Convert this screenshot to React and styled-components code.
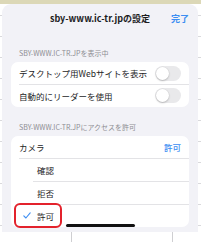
import React from 'react'
import styled, { createGlobalStyle } from 'styled-components'

const Global = createGlobalStyle`
  html, body { margin: 0; padding: 0; background: #fff; }
  * { box-sizing: border-box; }
`;

const Page = styled.div`
  position: relative;
  width: 201px;
  height: 242px;
  overflow: hidden;
  background: #fff;
  font-family: "Noto Sans CJK JP", "Noto Sans", sans-serif;
  display: flex;
  flex-direction: column;
`;

const TopStrip = styled.div`
  height: 4px;
  background: #dcd8b7;
`;

const BackList = styled.div`
  flex: 1;
`;

const BackRow = styled.div`
  height: ${p => p.h}px;
  border-bottom: 1px solid #d9d9dc;
`;

const TabBar = styled.div`
  height: 10px;
  display: grid;
  grid-template-columns: 71px 101px 1fr;
`;

const TabCell = styled.div`
  border-left: ${p => (p.first ? 'none' : '1px solid #cfcfd2')};
`;

const Sheet = styled.div`
  position: absolute;
  top: 4px;
  left: 2px;
  width: 196px;
  height: 228px;
  background: #f2f2f7;
  border-radius: 9px 9px 0 0;
  overflow: hidden;
  padding: 0 9px;
`;

const Header = styled.div`
  height: 28px;
  display: flex;
  align-items: center;
  justify-content: center;
  position: relative;
  margin: 0 -9px;
`;

const Title = styled.div`
  font-size: 9px;
  font-weight: 700;
  color: #1c1c1e;
`;

const Done = styled.div`
  position: absolute;
  right: 9px;
  top: 0;
  height: 28px;
  display: flex;
  align-items: center;
  font-size: 9px;
  font-weight: 700;
  color: #3d8ef2;
`;

const SectionHead = styled.div`
  padding: ${p => p.top}px 8px 4px;
  font-size: 7px;
  line-height: 9px;
  color: #8e8e93;
  white-space: nowrap;
`;

const Card = styled.div`
  background: #fff;
  border-radius: 7px;
  overflow: hidden;
`;

const Row = styled.div`
  height: ${p => p.h || 22}px;
  display: flex;
  align-items: center;
  padding: 0 8px 0 ${p => p.indent || 8}px;
  position: relative;
  font-size: 8.5px;
  color: #1c1c1e;
  &::before {
    content: '';
    display: ${p => (p.sep ? 'block' : 'none')};
    position: absolute;
    top: 0;
    left: ${p => p.sep}px;
    right: 0;
    height: 1px;
    background: #e3e3e6;
  }
`;

const Label = styled.span`
  flex: 1;
  min-width: 0;
  white-space: nowrap;
`;

const Value = styled.span`
  color: #3d8ef2;
  font-size: 8.5px;
  font-weight: 500;
  flex-shrink: 0;
`;

const Toggle = styled.div`
  flex-shrink: 0;
  width: 26px;
  height: 15px;
  border-radius: 8px;
  background: #e9e9eb;
  position: relative;
  &::after {
    content: '';
    position: absolute;
    top: 1px;
    left: 1px;
    width: 13px;
    height: 13px;
    border-radius: 50%;
    background: #fff;
    box-shadow: 0 1px 2px rgba(0, 0, 0, 0.2), 0 0 0 0.5px rgba(0, 0, 0, 0.05);
  }
`;

const Check = styled.svg`
  position: absolute;
  left: 12px;
  top: 8px;
`;

const Highlight = styled.div`
  position: absolute;
  left: 14px;
  top: 203px;
  width: 48px;
  height: 25px;
  border: 2px solid #e3222c;
  border-radius: 6px;
`;

const HomeBar = styled.div`
  position: absolute;
  left: 66px;
  top: 224px;
  width: 69px;
  height: 3px;
  border-radius: 2px;
  background: #111;
`;

const App = () => {
  const backRows = [12, 21, 21, 21, 21, 21, 21, 21, 21, 21, 21]

  return (
    <Page>
      <Global />
      <TopStrip />
      <BackList>
        {backRows.map((h, i) => <BackRow key={i} h={h} />)}
      </BackList>
      <TabBar>
        <TabCell first />
        <TabCell />
        <TabCell />
      </TabBar>

      <Sheet>
        <Header>
          <Title>sby-www.ic-tr.jpの設定</Title>
          <Done>完了</Done>
        </Header>

        <SectionHead top={17}>SBY-WWW.IC-TR.JPを表示中</SectionHead>
        <Card>
          <Row h={22}>
            <Label>デスクトップ用Webサイトを表示</Label>
            <Toggle />
          </Row>
          <Row h={23} sep={8}>
            <Label>自動的にリーダーを使用</Label>
            <Toggle />
          </Row>
        </Card>

        <SectionHead top={16}>SBY-WWW.IC-TR.JPにアクセスを許可</SectionHead>
        <Card>
          <Row h={22}>
            <Label>カメラ</Label>
            <Value>許可</Value>
          </Row>
          <Row h={23} sep={8} indent={26}>
            <Label>確認</Label>
          </Row>
          <Row h={23} sep={22} indent={26}>
            <Label>拒否</Label>
          </Row>
          <Row h={23} sep={22} indent={26}>
            <Check width="8" height="7" viewBox="0 0 8 7">
              <path d="M0.8 3.9 L2.9 6 L7.2 0.8" fill="none" stroke="#3d8ef2" strokeWidth="1.1" strokeLinecap="round" strokeLinejoin="round" />
            </Check>
            <Label>許可</Label>
          </Row>
        </Card>
      </Sheet>

      <Highlight />
      <HomeBar />
    </Page>
  )
}

export default App
